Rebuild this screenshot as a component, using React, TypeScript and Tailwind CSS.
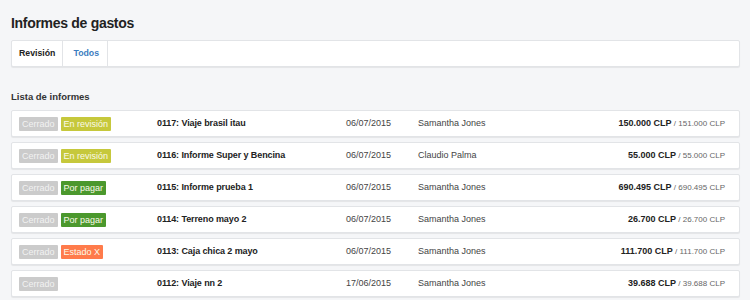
import React from "react";

type Estado = { label: string; color: string };

const informes: {
  estado?: Estado;
  titulo: string;
  fecha: string;
  autor: string;
  monto: string;
  total: string;
}[] = [
  {
    estado: { label: "En revisión", color: "bg-[#c6c83c]" },
    titulo: "0117: Viaje brasil itau",
    fecha: "06/07/2015",
    autor: "Samantha Jones",
    monto: "150.000 CLP",
    total: "151.000 CLP",
  },
  {
    estado: { label: "En revisión", color: "bg-[#c6c83c]" },
    titulo: "0116: Informe Super y Bencina",
    fecha: "06/07/2015",
    autor: "Claudio Palma",
    monto: "55.000 CLP",
    total: "55.000 CLP",
  },
  {
    estado: { label: "Por pagar", color: "bg-[#4b982d]" },
    titulo: "0115: Informe prueba 1",
    fecha: "06/07/2015",
    autor: "Samantha Jones",
    monto: "690.495 CLP",
    total: "690.495 CLP",
  },
  {
    estado: { label: "Por pagar", color: "bg-[#4b982d]" },
    titulo: "0114: Terreno mayo 2",
    fecha: "06/07/2015",
    autor: "Samantha Jones",
    monto: "26.700 CLP",
    total: "26.700 CLP",
  },
  {
    estado: { label: "Estado X", color: "bg-[#ff7b4b]" },
    titulo: "0113: Caja chica 2 mayo",
    fecha: "06/07/2015",
    autor: "Samantha Jones",
    monto: "111.700 CLP",
    total: "111.700 CLP",
  },
  {
    titulo: "0112: Viaje nn 2",
    fecha: "17/06/2015",
    autor: "Samantha Jones",
    monto: "39.688 CLP",
    total: "39.688 CLP",
  },
];

export default function App() {
  return (
    <div className="min-h-screen bg-[#f5f6f8] pl-[11px] pr-[10px] pt-[14px] font-['Liberation_Sans',Arial,sans-serif] text-[#222]">
      <h1 className="text-[14px] font-bold leading-[18px] tracking-[-0.3px] text-[#222]">
        Informes de gastos
      </h1>

      <div className="mt-[8px] flex h-[27px] rounded-[2px] border border-[#e2e4e7] bg-white shadow-[0_1px_1px_rgba(0,0,0,0.07)]">
        <div className="flex items-center border-r border-[#e2e4e7] px-[7px] text-[8.75px] font-bold text-[#222]">
          Revisión
        </div>
        <div className="flex items-center border-r border-[#e2e4e7] pl-[10px] pr-[8px] text-[8.75px] font-bold text-[#3d7dc0]">
          Todos
        </div>
      </div>

      <h2 className="mt-[24px] text-[9.5px] font-bold leading-[12px] text-[#333]">
        Lista de informes
      </h2>

      <div className="mt-[7px] flex flex-col gap-[5px]">
        {informes.map((r) => (
          <div
            key={r.titulo}
            className="flex h-[27px] items-center rounded-[2px] border border-[#e2e4e7] bg-white pl-[7px] pr-[14px] text-[9px] shadow-[0_1px_1px_rgba(0,0,0,0.07)]"
          >
            <div className="flex w-[138px] gap-[3px]">
              <span className="rounded-[1px] bg-[#cbcbcb] px-[3px] leading-[14px] text-[#f2f2f2]">
                Cerrado
              </span>
              {r.estado && (
                <span
                  className={`rounded-[1px] px-[3px] leading-[14px] text-[#fafae8] ${r.estado.color}`}
                >
                  {r.estado.label}
                </span>
              )}
            </div>
            <div className="w-[189px] font-bold tracking-[-0.1px] text-[#222]">
              {r.titulo}
            </div>
            <div className="w-[72px] text-[#444]">{r.fecha}</div>
            <div className="flex-1 text-[#444]">{r.autor}</div>
            <div className="text-[#222]">
              <span className="font-bold">{r.monto}</span>
              <span className="text-[8px] text-[#666]"> / {r.total}</span>
            </div>
          </div>
        ))}
      </div>
    </div>
  );
}
